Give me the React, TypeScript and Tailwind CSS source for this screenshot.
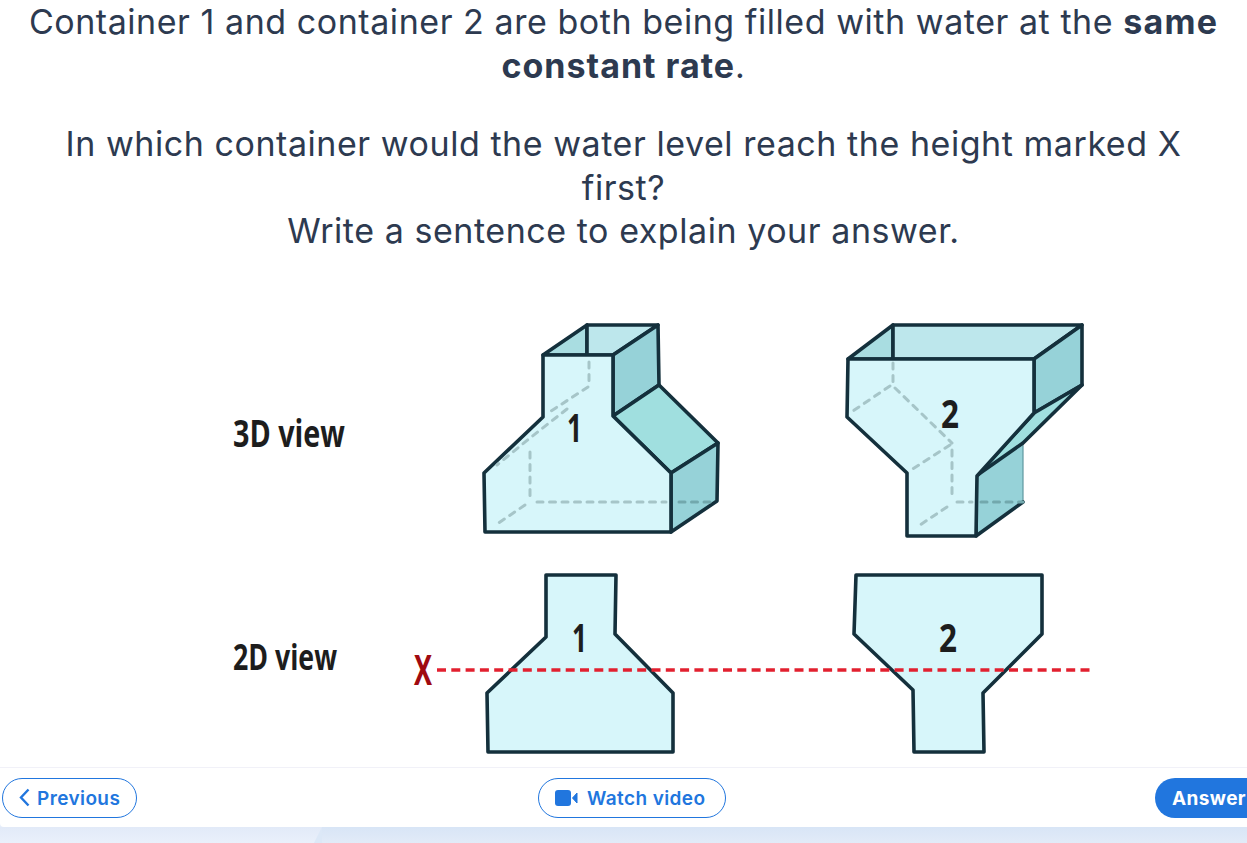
const CONDENSED = "'Open Sans', sans-serif";

const Dashes = ({ d, className = "stroke-[#a6c5c8]" }: { d: string; className?: string }) => (
  <path d={d} fill="none" strokeWidth="3" strokeDasharray="6 6.5" strokeLinecap="round" className={className} />
);

const Label = ({ x, y, size, len, children, fill = "#1d1d1d" }: { x: number; y: number; size: number; len: number; children: string; fill?: string }) => (
  <text
    x={x}
    y={y}
    fontSize={size}
    fontWeight={700}
    fontFamily={CONDENSED}
    fill={fill}
    textLength={len}
    lengthAdjust="spacingAndGlyphs"
  >
    {children}
  </text>
);

const Figure = () => (
  <svg viewBox="0 253 1247 514" className="block w-[1247px] h-[514px] shrink-0">
    <g stroke="#14303c" strokeWidth="3.6" strokeLinejoin="round" strokeLinecap="round">
      {/* container 1, 3D */}
      <path d="M543 355L587 325V355Z" fill="#a9dde1" />
      <path d="M587 325H658L613 355H587Z" fill="#bde7ec" />
      <path d="M613 355L658 325L659 385L613 416Z" fill="#96d2d8" />
      <path d="M613 416L659 385L718 443L671 473Z" fill="#a0dfdf" />
      <path d="M671 473L718 443L717 501L671 532Z" fill="#96d2d8" />
      <path d="M543 355H613V416L671 473V532H485L484 473L543 417Z" fill="#d7f6fa" />

      {/* container 2, 3D */}
      <path d="M848 359L893 325V359Z" fill="#a9dde1" />
      <path d="M893 325H1082L1034 359H893Z" fill="#bde7ec" />
      <path d="M1034 359L1082 325V385L1034 413Z" fill="#96d2d8" />
      <path d="M976 476L1023 443V502L976 536Z" fill="#96d2d8" stroke="#5f98a0" strokeWidth="1.2" />
      <path d="M976 476V536L1023 502" fill="none" />
      <path d="M1034 413L1082 385L1023 443L976 476Z" fill="#a0dfdf" />
      <path d="M848 359H1034V413L977 476L976 536H907V473L847 417Z" fill="#d7f6fa" />

      {/* 2D views */}
      <path d="M546 575H616L615 634L673 693V752H488L487 693L546 637Z" fill="#d7f6fa" />
      <path d="M856 575H1042V634L983 693L984 752H914L913 690L854 634Z" fill="#d7f6fa" />
    </g>

    <Dashes d="M589 362V382M588 387L548 413M567 409L530 438L497 465M530 452V500M537 502H666M525 505L497 524" />
    <Dashes d="M679 502H713" className="stroke-[#72a8ad]" />
    <Dashes d="M893 363V382M890 386L850 413M895 388L952 443M950 445L908 472M952 450V500M957 502H972M947 507L917 527" />
    <Dashes d="M981 502H1023" className="stroke-[#72a8ad]" />

    <path d="M437 670H1092" fill="none" stroke="#e2202f" strokeWidth="3.4" strokeDasharray="9 5.3" strokeLinecap="butt" />

    <Label x={233} y={447} size={38} len={112}>3D view</Label>
    <Label x={233} y={670} size={35} len={104}>2D view</Label>
    <Label x={567} y={442} size={39} len={15}>1</Label>
    <Label x={941} y={428} size={39} len={18}>2</Label>
    <Label x={572} y={652} size={39} len={15}>1</Label>
    <Label x={939} y={652} size={39} len={18}>2</Label>
    <Label x={414} y={685} size={42} len={18} fill="#a00a10">X</Label>
  </svg>
);

const App = () => {
  return (
    <div className="w-[1247px] h-[843px] overflow-hidden flex flex-col bg-[#e6eefa] font-['Inter',sans-serif]">
      <div className="flex-1 flex flex-col bg-white rounded-bl-[4px]">
        <div className="h-[253px] shrink-0 text-center text-[#2d3a50] text-[34px] leading-[43.5px] tracking-[0.55px]">
          <p>
            Container 1 and container 2 are both being filled with water at the{" "}
            <b className="font-bold tracking-[1.2px]">same</b>
            <br />
            <b className="font-bold tracking-[1px]">constant rate</b>.
          </p>
          <p className="mt-[35px]">
            In which container would the water level reach the height marked X
            <br />
            first?
            <br />
            Write a sentence to explain your answer.
          </p>
        </div>

        <Figure />

        <div className="h-[60px] shrink-0 border-t border-[#f1f1f8] flex items-center overflow-hidden text-[19px] tracking-[0.4px] font-semibold text-[#2176de]">
          <button className="ml-[2px] w-[135px] h-10 rounded-full border border-[#2176de] flex items-center pl-4 gap-[7px]">
            <svg width="11" height="19" viewBox="0 0 11 19" className="shrink-0">
              <path d="M9.5 1.5L2 9.5l7.5 8" fill="none" stroke="currentColor" strokeWidth="2.4" />
            </svg>
            <span className="mt-1">Previous</span>
          </button>
          <button className="ml-[401px] w-[188px] h-10 rounded-full border border-[#2176de] flex items-center pl-4 gap-[9px]">
            <svg width="23" height="16" viewBox="0 0 23 16" className="shrink-0">
              <rect x="0" y="0" width="16" height="16" rx="3" fill="currentColor" />
              <path d="M17.5 8L22 3V13Z" fill="currentColor" stroke="currentColor" strokeWidth="1" strokeLinejoin="round" />
            </svg>
            <span className="mt-1">Watch video</span>
          </button>
          <button className="ml-auto mr-[-20px] w-[112px] h-10 rounded-full bg-[#2176de] text-white font-bold flex items-center pl-[17px] shrink-0">
            <span className="mt-1">Answer</span>
          </button>
        </div>
      </div>

      <div className="h-4 shrink-0 flex bg-gradient-to-b from-[#e2eaf8] to-[#eaf0fb]">
        <div className="w-[314px] shrink-0"></div>
        <svg width="8" height="16" viewBox="0 0 8 16" className="shrink-0">
          <path d="M0 16L8 0V16Z" fill="#dce8f7" />
        </svg>
        <div className="flex-1 bg-gradient-to-b from-[#d8e5f6] to-[#e2ebf8]"></div>
      </div>
    </div>
  );
};

export default App;
